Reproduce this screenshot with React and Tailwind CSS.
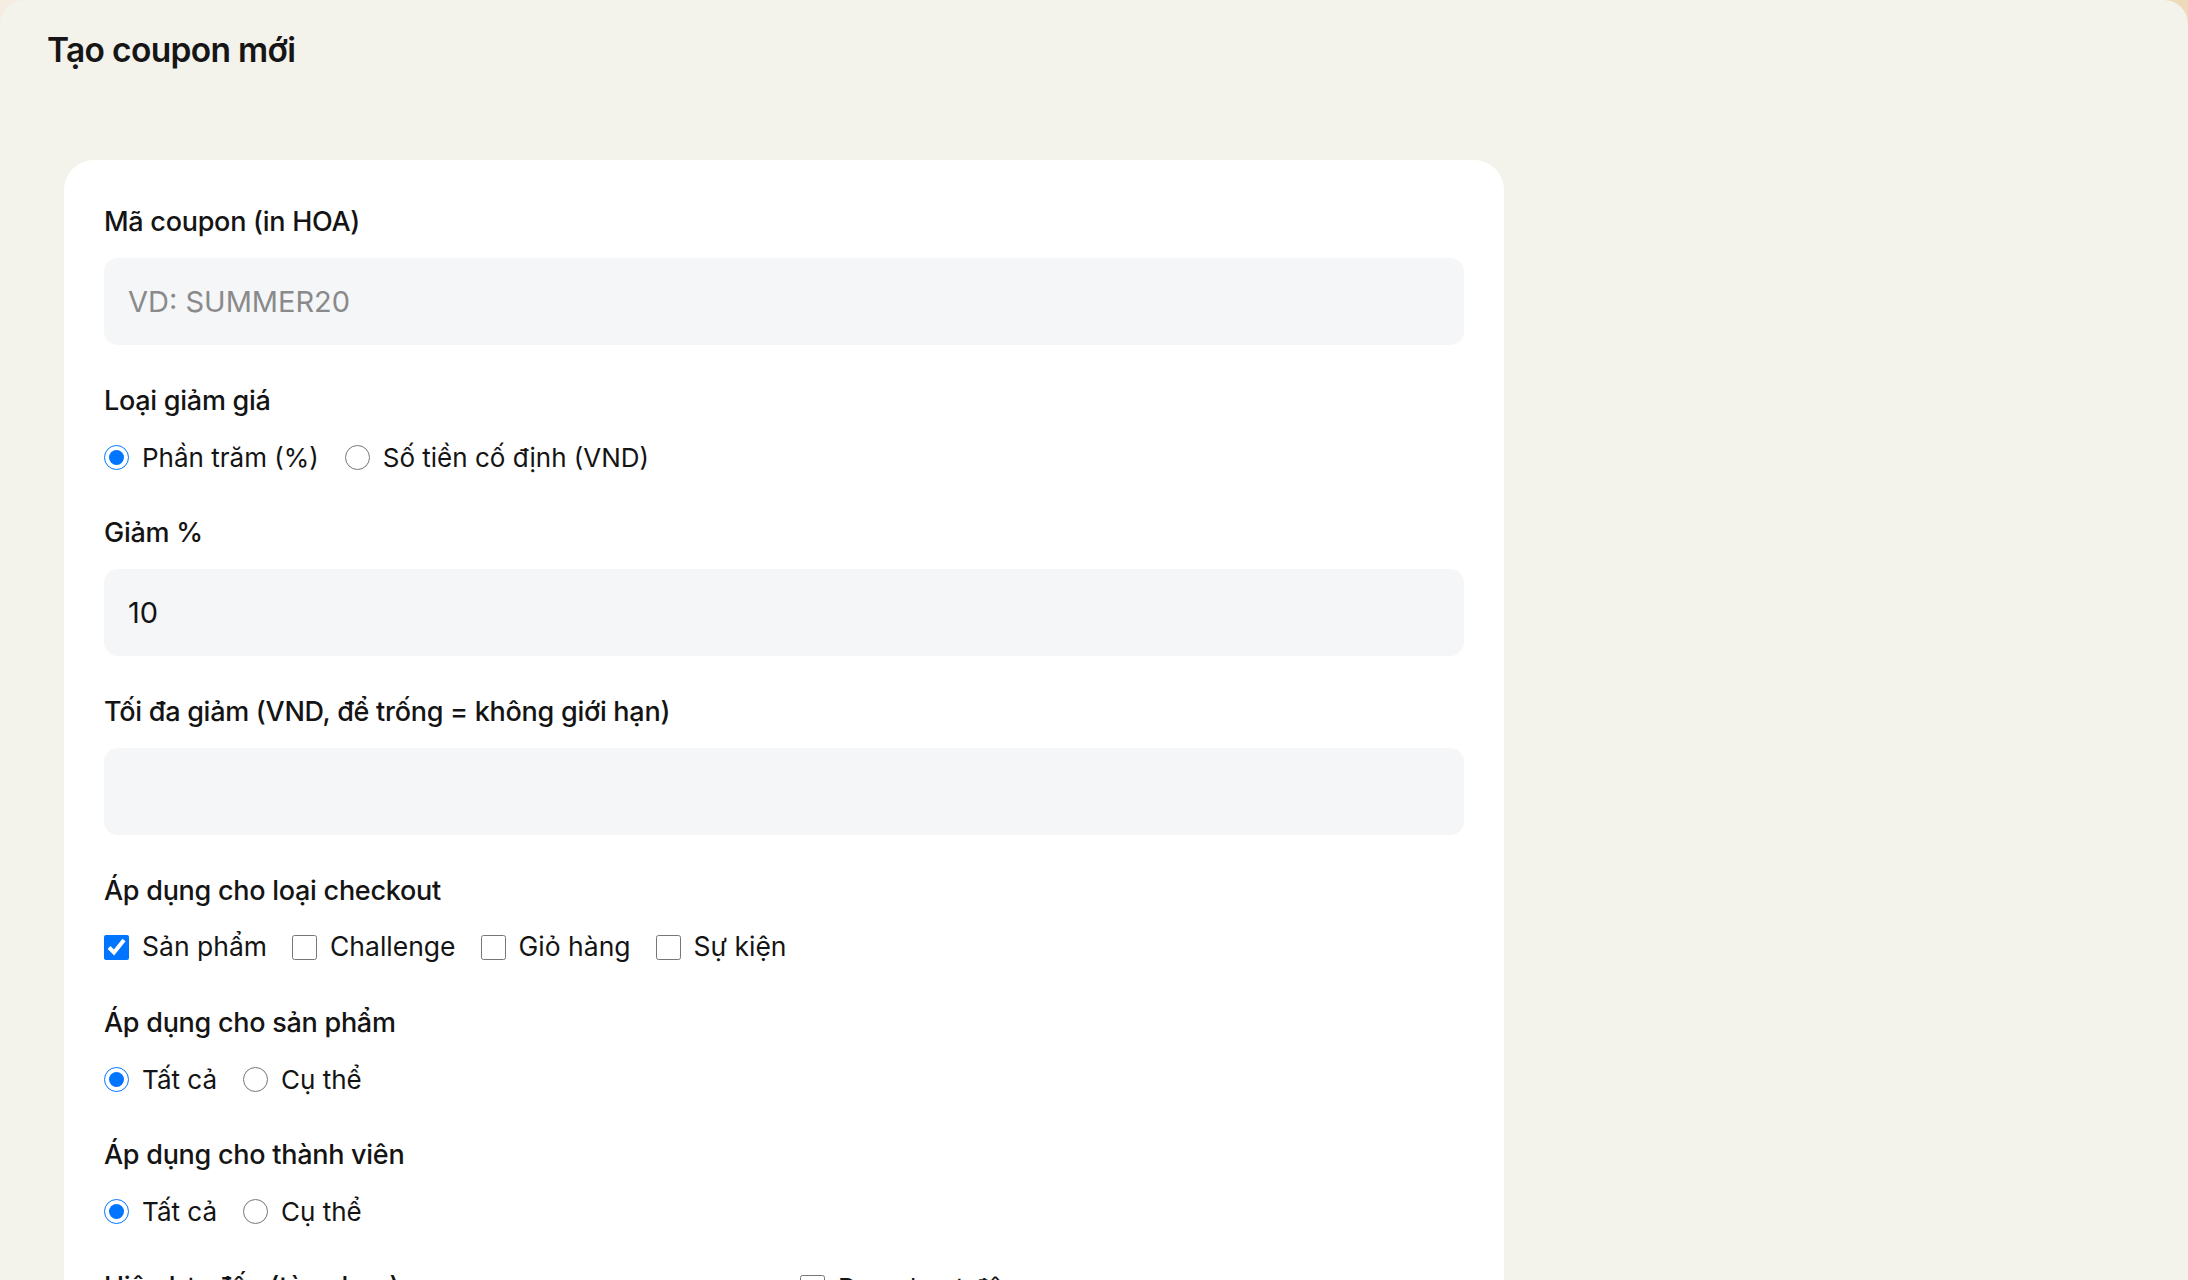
import { useState } from 'react'

/* Coupon create form: text fields, discount type radios, checkout checkboxes */

function Field({ label, children }) {
  return (
    <div className="flex flex-col">
      <label className="mb-[18px] text-[27px] leading-[36px] font-medium tracking-[-0.01em] text-[#141414]">{label}</label>
      {children}
    </div>
  )
}

function TextInput({ placeholder, value, onChange }) {
  return (
    <input
      type="text"
      value={value}
      placeholder={placeholder}
      onChange={(e) => onChange(e.target.value)}
      className="h-[87px] w-full rounded-[14px] bg-[#f5f6f8] px-6 text-[29px] text-[#141414] outline-none placeholder:text-[#8a8a8a]"
    />
  )
}

function RadioGroup({ name, options, value, onChange }) {
  return (
    <div className="flex h-10 items-center gap-[26px]">
      {options.map((o) => (
        <label key={o.value} className="flex cursor-pointer items-center gap-[13px] text-[26px] text-[#141414]">
          <input
            type="radio"
            name={name}
            checked={value === o.value}
            onChange={() => onChange(o.value)}
            className="m-0 h-[25px] w-[25px]"
          />
          {o.label}
        </label>
      ))}
    </div>
  )
}

function CheckRow({ options, value, onChange }) {
  const toggle = (k) => onChange({ ...value, [k]: !value[k] })
  return (
    <div className="flex h-10 items-center gap-[25px]">
      {options.map((o) => (
        <label key={o.value} className="flex cursor-pointer items-center gap-[13px] text-[26.5px] text-[#141414]">
          <input
            type="checkbox"
            checked={!!value[o.value]}
            onChange={() => toggle(o.value)}
            className="m-0 h-[25px] w-[25px]"
          />
          {o.label}
        </label>
      ))}
    </div>
  )
}

export default function App() {
  const [code, setCode] = useState('')
  const [type, setType] = useState('percent')
  const [percent, setPercent] = useState('10')
  const [maxDiscount, setMaxDiscount] = useState('')
  const [checkout, setCheckout] = useState({ product: true })
  const [productScope, setProductScope] = useState('all')
  const [memberScope, setMemberScope] = useState('all')
  const [active, setActive] = useState(false)

  return (
    <div className="h-[1280px] overflow-hidden bg-gradient-to-r from-[#f5ede1] to-[#eed9ba] font-['Inter','Noto_Sans',sans-serif]">
      <main className="h-full rounded-t-[24px] bg-[#f3f2eb] pt-[30px] pl-[47px]">
        <h1 className="text-[33.5px] leading-[40px] font-semibold tracking-[-0.02em] text-[#161616]">Tạo coupon mới</h1>

        <div className="mt-[90px] ml-[17px] flex w-[1440px] flex-col gap-[38px] rounded-[30px] bg-white px-10 pt-[44px] pb-10">
          <Field label="Mã coupon (in HOA)">
            <TextInput placeholder="VD: SUMMER20" value={code} onChange={(v) => setCode(v.toUpperCase())} />
          </Field>

          <Field label="Loại giảm giá">
            <RadioGroup
              name="type"
              value={type}
              onChange={setType}
              options={[
                { value: 'percent', label: 'Phần trăm (%)' },
                { value: 'fixed', label: 'Số tiền cố định (VND)' },
              ]}
            />
          </Field>

          <Field label="Giảm %">
            <TextInput value={percent} onChange={setPercent} />
          </Field>

          <Field label="Tối đa giảm (VND, để trống = không giới hạn)">
            <TextInput value={maxDiscount} onChange={setMaxDiscount} />
          </Field>

          <Field label="Áp dụng cho loại checkout">
            <CheckRow
              value={checkout}
              onChange={setCheckout}
              options={[
                { value: 'product', label: 'Sản phẩm' },
                { value: 'challenge', label: 'Challenge' },
                { value: 'cart', label: 'Giỏ hàng' },
                { value: 'event', label: 'Sự kiện' },
              ]}
            />
          </Field>

          <Field label="Áp dụng cho sản phẩm">
            <RadioGroup
              name="productScope"
              value={productScope}
              onChange={setProductScope}
              options={[
                { value: 'all', label: 'Tất cả' },
                { value: 'specific', label: 'Cụ thể' },
              ]}
            />
          </Field>

          <Field label="Áp dụng cho thành viên">
            <RadioGroup
              name="memberScope"
              value={memberScope}
              onChange={setMemberScope}
              options={[
                { value: 'all', label: 'Tất cả' },
                { value: 'specific', label: 'Cụ thể' },
              ]}
            />
          </Field>

          <div className="grid grid-cols-2 gap-x-8">
            <Field label="Hiệu lực đến (tùy chọn)">
              <TextInput value="" onChange={() => {}} />
            </Field>
            <label className="flex h-9 cursor-pointer items-center gap-[13px] text-[26px] text-[#141414]">
              <input type="checkbox" checked={active} onChange={() => setActive(!active)} className="m-0 h-[25px] w-[25px]" />
              Đang hoạt động
            </label>
          </div>
        </div>
      </main>
    </div>
  )
}
